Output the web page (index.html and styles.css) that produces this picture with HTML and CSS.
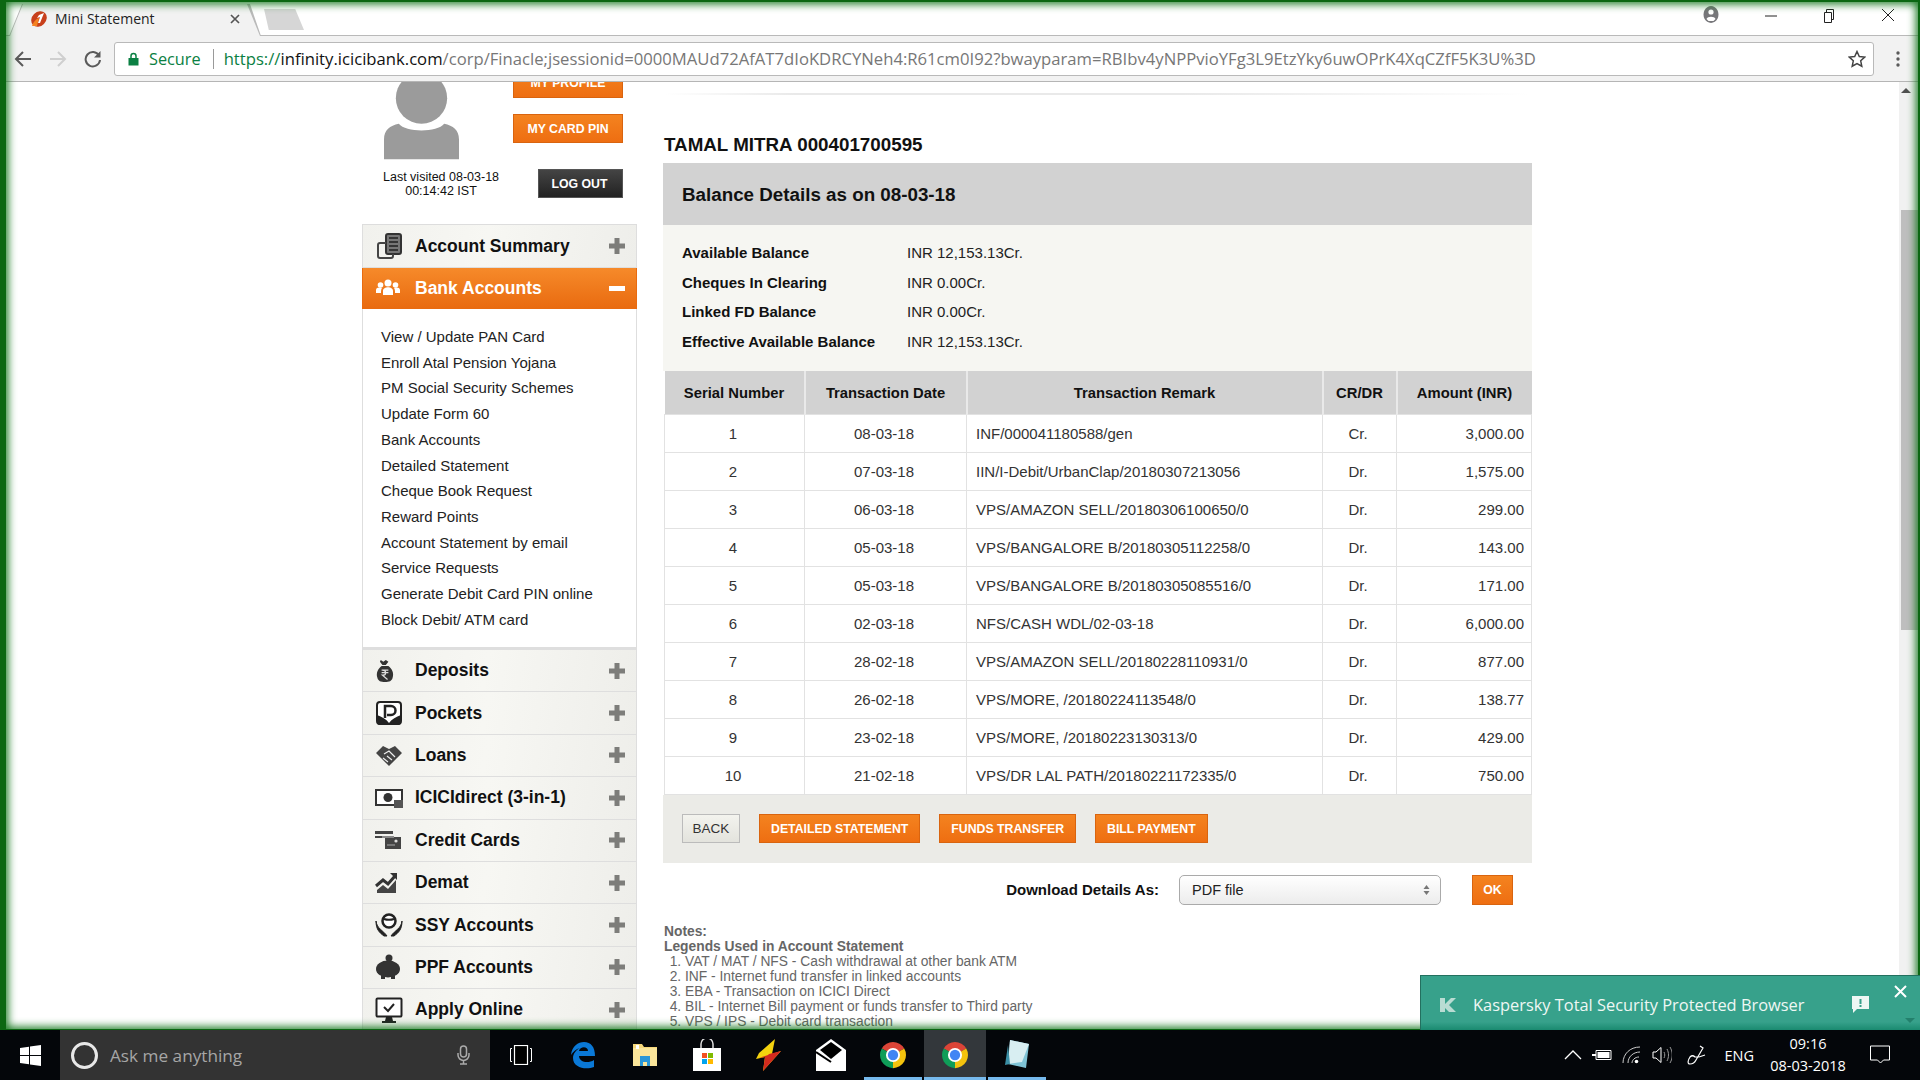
FILE: index.html
```html
<!DOCTYPE HTML>
<html>

<head>
    <title>Mini Statement</title>
    <meta name="viewport" content="width=device-width, initial-scale=1">
    <link rel="stylesheet" href="styles.css">
</head>

<body>
    <svg class="defs" width="0" height="0">
        <symbol id="plus" viewBox="0 0 16 16">
            <path d="M5.500 0h5v5.500H16v5h-5.500V16h-5v-5.500H0v-5h5.500z" fill="#7d7d7a" />
        </symbol>
        <symbol id="chrome" viewBox="0 0 32 32">
            <path d="M16 16 4 9A14 14 0 0 1 28 9z" fill="#db4437" />
            <path d="M16 16 28 9A14 14 0 0 1 16 30z" fill="#f4c20d" />
            <path d="M16 16 16 30A14 14 0 0 1 4 9z" fill="#0f9d58" />
            <circle cx="16" cy="16" r="6.500" fill="#4285f4" stroke="#fff" stroke-width="2" />
        </symbol>
    </svg>

    <div class="window">
        <div class="tabstrip">
            <div class="tab">
                <svg class="favicon" width="18" height="18" viewBox="0 0 18 18">
                    <ellipse cx="9" cy="9" rx="8.500" ry="7" transform="rotate(-45 9 9)" fill="#c8401c" />
                    <path d="M2 16C3 12 6 9 9 8L7 16z" fill="#f58220" />
                    <path d="M9 5 14 3 10 13 8 13 10 7 7 8z" fill="#fff" />
                </svg>
                <span class="tab-title">Mini Statement</span>
                <svg class="tab-close" width="12" height="12" viewBox="0 0 12 12">
                    <path d="M2 2l8 8M10 2l-8 8" stroke="#555" stroke-width="1.700" fill="none" />
                </svg>
            </div>
            <div class="newtab"></div>
            <div class="winbtns">
                <svg width="16" height="18" viewBox="0 0 16 18">
                    <path d="M8 0a7.500 8.500 0 1 0 .01 0z" fill="#77777a" />
                    <circle cx="8" cy="6" r="2.600" fill="#fff" />
                    <path d="M3.500 13c1-3 8-3 9 0l-2 2h-5z" fill="#fff" />
                </svg>
                <svg class="winbtn-min" width="12" height="12" viewBox="0 0 12 12">
                    <path d="M0 6h12" stroke="#222" stroke-width="1" />
                </svg>
                <svg class="winbtn-max" width="12" height="14" viewBox="0 0 12 14">
                    <path d="M1.500 3.500h7v10h-7zM3.500 3.500v-3h7v10h-2" stroke="#222" fill="none" />
                </svg>
                <svg class="winbtn-close" width="14" height="14" viewBox="0 0 14 14">
                    <path d="M1 1l12 12M13 1 1 13" stroke="#222" fill="none" />
                </svg>
            </div>
        </div>
        <div class="toolbar">
            <svg class="navicon" width="18" height="18" viewBox="0 0 18 18">
                <path d="M17 9H2M9 2 2 9l7 7" stroke="#5a5a5a" stroke-width="2" fill="none" />
            </svg>
            <svg class="navicon" width="18" height="18" viewBox="0 0 18 18">
                <path d="M1 9h15M9 2l7 7-7 7" stroke="#cfcfcf" stroke-width="2" fill="none" />
            </svg>
            <svg class="navicon" width="18" height="18" viewBox="0 0 18 18">
                <path d="M15 5.500A7.200 7.200 0 1 0 16 10" stroke="#5a5a5a" stroke-width="2" fill="none" />
                <path d="M16.500 1v6.500H10z" fill="#5a5a5a" />
            </svg>
            <div class="omnibox">
                <svg width="11" height="14" viewBox="0 0 11 14">
                    <path d="M3 6V4a2.500 2.500 0 0 1 5 0v2" stroke="#0b8043" stroke-width="1.500" fill="none" />
                    <path d="M0.500 6h10v7.500H0.500z" fill="#0b8043" />
                </svg>
                <span class="secure">Secure</span>
                <span class="omni-sep"></span>
                <span class="url"><span class="url-scheme">https://</span><span class="url-host">infinity.icicibank.com</span>/corp/Finacle;jsessionid=0000MAUd72AfAT7dIoKDRCYNeh4:R61cm0I92?bwayparam=RBIbv4yNPPvioYFg3L9EtzYky6uwOPrK4XqCZfF5K3U%3D</span>
                <svg class="star" width="18" height="18" viewBox="0 0 18 18">
                    <path d="M9 1.500l2.300 5 5.400.6-4 3.700 1.100 5.400L9 13.500l-4.800 2.700 1.100-5.400-4-3.700 5.400-.6z" stroke="#444" stroke-width="1.500" fill="none" />
                </svg>
            </div>
            <svg class="dots" width="4" height="16" viewBox="0 0 4 16">
                <circle cx="2" cy="2" r="1.700" fill="#5a5a5a" />
                <circle cx="2" cy="8" r="1.700" fill="#5a5a5a" />
                <circle cx="2" cy="14" r="1.700" fill="#5a5a5a" />
            </svg>
        </div>

        <div class="viewport">
            <div class="page">
                <div class="content">
                    <div class="sidebar">
                        <div class="profile">
                            <div class="profile-left">
                                <svg class="avatar" width="75" height="100" viewBox="0 0 76 100">
                                    <circle cx="38" cy="38" r="26" fill="#9b9b9b" />
                                    <path d="M0 100V80C0 70 6 66 15 64C22 73 54 73 61 64C70 66 76 70 76 80V100z" fill="#9b9b9b" />
                                </svg>
                                <p class="lastvisit">Last visited 08-03-18<br>00:14:42 IST</p>
                            </div>
                            <div class="profile-btns">
                                <button class="btn btn-profile">MY PROFILE</button>
                                <button class="btn btn-pin">MY CARD PIN</button>
                                <button class="btn btn-dark">LOG OUT</button>
                            </div>
                        </div>
                        <div class="nav">
                            <div class="nav-item nav-first">
                                <svg class="nav-icon" width="28" height="28" viewBox="0 0 28 28">
                                    <rect x="11" y="2" width="15" height="20" rx="2" fill="#777" stroke="#333" stroke-width="2" />
                                    <path d="M14 6h9M14 10h9M14 14h9M14 18h9" stroke="#222" stroke-width="1.500" />
                                    <path d="M11 11H5a2 2 0 0 0-2 2v11a2 2 0 0 0 2 2h11a2 2 0 0 0 2-2v-2" stroke="#444" stroke-width="2" fill="none" />
                                </svg>
                                <span>Account Summary</span>
                                <svg class="nav-toggle" width="16" height="16"><use href="#plus" /></svg>
                            </div>
                            <div class="nav-item nav-active">
                                <svg class="nav-icon" width="26" height="26" viewBox="0 0 26 26">
                                    <circle cx="13" cy="8" r="3.500" fill="#fff" />
                                    <circle cx="5.500" cy="10" r="2.800" fill="#fff" />
                                    <circle cx="20.500" cy="10" r="2.800" fill="#fff" />
                                    <path d="M8 20v-4c0-5 10-5 10 0v4zM1 18v-3c0-3 4-3 6-2-1 1-1 3-1 5zM25 18v-3c0-3-4-3-6-2 1 1 1 3 1 5z" fill="#fff" />
                                </svg>
                                <span>Bank Accounts</span>
                                <span class="nav-minus"></span>
                            </div>
                            <ul class="subnav">
                                <li>View / Update PAN Card</li>
                                <li>Enroll Atal Pension Yojana</li>
                                <li>PM Social Security Schemes</li>
                                <li>Update Form 60</li>
                                <li>Bank Accounts</li>
                                <li>Detailed Statement</li>
                                <li>Cheque Book Request</li>
                                <li>Reward Points</li>
                                <li>Account Statement by email</li>
                                <li>Service Requests</li>
                                <li>Generate Debit Card PIN online</li>
                                <li>Block Debit/ ATM card</li>
                            </ul>
                            <div class="nav-item">
                                <svg class="nav-icon nav-icon-bag" width="22" height="28" viewBox="0 0 26 28">
                                    <path d="M8 1l3 2 3-2 3 2-3 4h-4L7 3z" fill="#333" />
                                    <path d="M9 8h8c4 3 7 8 5 14-1 4-4 5-9 5s-8-1-9-5C2 16 5 11 9 8z" fill="#333" />
                                    <path d="M9 13h8M9 16h8M10 13c5 0 5 6 0 6l6 5" stroke="#ddd" stroke-width="1.500" fill="none" />
                                </svg>
                                <span>Deposits</span>
                                <svg class="nav-toggle" width="16" height="16"><use href="#plus" /></svg>
                            </div>
                            <div class="nav-item">
                                <svg class="nav-icon" width="28" height="26" viewBox="0 0 28 26">
                                    <rect x="2" y="2" width="24" height="22" rx="3" fill="#fff" stroke="#222" stroke-width="2" />
                                    <path d="M2 15c5 2 9 4 12 8 3-4 7-6 12-8v7a3 3 0 0 1-3 3H5a3 3 0 0 1-3-3z" fill="#222" />
                                    <path d="M10 18V6h6a4 4 0 0 1 0 9h-4" stroke="#222" stroke-width="2.500" fill="none" />
                                </svg>
                                <span>Pockets</span>
                                <svg class="nav-toggle" width="16" height="16"><use href="#plus" /></svg>
                            </div>
                            <div class="nav-item">
                                <svg class="nav-icon" width="28" height="24" viewBox="0 0 28 24">
                                    <path d="M1 10 8 3l6 3 6-3 7 7-5 5-8 8-8-8z" fill="#444" />
                                    <path d="M9 11l5-3 6 6M8 15l5 4M12 13l5 4" stroke="#eee" stroke-width="1.200" fill="none" />
                                </svg>
                                <span>Loans</span>
                                <svg class="nav-toggle" width="16" height="16"><use href="#plus" /></svg>
                            </div>
                            <div class="nav-item">
                                <svg class="nav-icon" width="28" height="20" viewBox="0 0 28 20">
                                    <rect x="1" y="2" width="26" height="15" fill="#fff" stroke="#333" stroke-width="2" />
                                    <circle cx="13" cy="9.500" r="4.500" fill="#333" />
                                    <path d="M19 12h9v8h-9z" fill="#555" />
                                </svg>
                                <span>ICICIdirect (3-in-1)</span>
                                <svg class="nav-toggle" width="16" height="16"><use href="#plus" /></svg>
                            </div>
                            <div class="nav-item">
                                <svg class="nav-icon" width="26" height="20" viewBox="0 0 26 20">
                                    <path d="M0 1h18v3H0zM0 6h8v2H0z" fill="#444" />
                                    <path d="M10 7h16v12H10z" fill="#444" />
                                    <path d="M7 6h12v2H7z" fill="#888" />
                                    <circle cx="21" cy="11" r="1.600" fill="#ddd" />
                                    <path d="M12 15h8" stroke="#aaa" />
                                </svg>
                                <span>Credit Cards</span>
                                <svg class="nav-toggle" width="16" height="16"><use href="#plus" /></svg>
                            </div>
                            <div class="nav-item">
                                <svg class="nav-icon" width="24" height="22" viewBox="0 0 24 22">
                                    <path d="M1 14 8 8l5 4 7-8" stroke="#333" stroke-width="3" fill="none" />
                                    <path d="M15 1h7v7z" fill="#333" />
                                    <path d="M2 21v-3l6-5 5 4 8-9v13z" fill="#444" />
                                </svg>
                                <span>Demat</span>
                                <svg class="nav-toggle" width="16" height="16"><use href="#plus" /></svg>
                            </div>
                            <div class="nav-item">
                                <svg class="nav-icon" width="28" height="26" viewBox="0 0 28 26">
                                    <circle cx="14" cy="9" r="6.500" fill="#fff" stroke="#222" stroke-width="2.500" />
                                    <path d="M9 7c3 1 7 1 10 0" stroke="#222" stroke-width="2" fill="none" />
                                    <path d="M1 9c1 8 7 9 11 15h-3C5 21 1 18 1 9zM27 9c-1 8-7 9-11 15h3c4-3 8-6 8-15z" fill="#222" stroke="#222" />
                                </svg>
                                <span>SSY Accounts</span>
                                <svg class="nav-toggle" width="16" height="16"><use href="#plus" /></svg>
                            </div>
                            <div class="nav-item">
                                <svg class="nav-icon" width="26" height="26" viewBox="0 0 26 26">
                                    <circle cx="14" cy="4" r="3.500" fill="#333" />
                                    <ellipse cx="13" cy="15" rx="12" ry="8.500" fill="#333" />
                                    <path d="M6 20h4v5H6zM16 20h4v5h-4z" fill="#333" />
                                </svg>
                                <span>PPF Accounts</span>
                                <svg class="nav-toggle" width="16" height="16"><use href="#plus" /></svg>
                            </div>
                            <div class="nav-item">
                                <svg class="nav-icon" width="28" height="26" viewBox="0 0 28 26">
                                    <rect x="1.500" y="1.500" width="25" height="18" rx="1" fill="#fff" stroke="#222" stroke-width="2" />
                                    <path d="M9 10l4 4 6-7" stroke="#222" stroke-width="2" fill="none" />
                                    <path d="M11 20h6l1 4h3v2H7v-2h3z" fill="#222" />
                                </svg>
                                <span>Apply Online</span>
                                <svg class="nav-toggle" width="16" height="16"><use href="#plus" /></svg>
                            </div>
                        </div>
                    </div>

                    <div class="main">
                        <div class="fade-line"></div>
                        <h1 class="acct-name">TAMAL MITRA 000401700595</h1>
                        <h2 class="balance-head">Balance Details as on 08-03-18</h2>
                        <div class="balance">
                            <b>Available Balance</b><span>INR 12,153.13Cr.</span>
                            <b>Cheques In Clearing</b><span>INR 0.00Cr.</span>
                            <b>Linked FD Balance</b><span>INR 0.00Cr.</span>
                            <b>Effective Available Balance</b><span>INR 12,153.13Cr.</span>
                        </div>
                        <table class="txns">
                            <colgroup>
                                <col class="col-serial">
                                <col class="col-date">
                                <col class="col-remark">
                                <col class="col-crdr">
                                <col class="col-amount">
                            </colgroup>
                            <thead>
                                <tr>
                                    <th>Serial Number</th>
                                    <th>Transaction Date</th>
                                    <th>Transaction Remark</th>
                                    <th>CR/DR</th>
                                    <th>Amount (INR)</th>
                                </tr>
                            </thead>
                            <tbody>
                                <tr><td>1</td><td>08-03-18</td><td>INF/000041180588/gen</td><td>Cr.</td><td>3,000.00</td></tr>
                                <tr><td>2</td><td>07-03-18</td><td>IIN/I-Debit/UrbanClap/20180307213056</td><td>Dr.</td><td>1,575.00</td></tr>
                                <tr><td>3</td><td>06-03-18</td><td>VPS/AMAZON SELL/20180306100650/0</td><td>Dr.</td><td>299.00</td></tr>
                                <tr><td>4</td><td>05-03-18</td><td>VPS/BANGALORE B/20180305112258/0</td><td>Dr.</td><td>143.00</td></tr>
                                <tr><td>5</td><td>05-03-18</td><td>VPS/BANGALORE B/20180305085516/0</td><td>Dr.</td><td>171.00</td></tr>
                                <tr><td>6</td><td>02-03-18</td><td>NFS/CASH WDL/02-03-18</td><td>Dr.</td><td>6,000.00</td></tr>
                                <tr><td>7</td><td>28-02-18</td><td>VPS/AMAZON SELL/20180228110931/0</td><td>Dr.</td><td>877.00</td></tr>
                                <tr><td>8</td><td>26-02-18</td><td>VPS/MORE, /20180224113548/0</td><td>Dr.</td><td>138.77</td></tr>
                                <tr><td>9</td><td>23-02-18</td><td>VPS/MORE, /20180223130313/0</td><td>Dr.</td><td>429.00</td></tr>
                                <tr><td>10</td><td>21-02-18</td><td>VPS/DR LAL PATH/20180221172335/0</td><td>Dr.</td><td>750.00</td></tr>
                            </tbody>
                        </table>
                        <div class="actions">
                            <button class="btn btn-light">BACK</button>
                            <button class="btn">DETAILED STATEMENT</button>
                            <button class="btn">FUNDS TRANSFER</button>
                            <button class="btn">BILL PAYMENT</button>
                        </div>
                        <div class="download">
                            <b>Download Details As:</b>
                            <div class="select">
                                <span>PDF file</span>
                                <svg width="7" height="12" viewBox="0 0 7 12">
                                    <path d="M3.500 1 6.500 5h-6zM3.500 11 .5 7h6z" fill="#777" />
                                </svg>
                            </div>
                            <button class="btn btn-ok">OK</button>
                        </div>
                        <div class="notes">
                            <b>Notes:</b>
                            <b>Legends Used in Account Statement</b>
                            <ol>
                                <li>VAT / MAT / NFS - Cash withdrawal at other bank ATM</li>
                                <li>INF - Internet fund transfer in linked accounts</li>
                                <li>EBA - Transaction on ICICI Direct</li>
                                <li>BIL - Internet Bill payment or funds transfer to Third party</li>
                                <li>VPS / IPS - Debit card transaction</li>
                            </ol>
                        </div>
                    </div>
                </div>
            </div>
            <div class="scrollbar">
                <span class="scroll-up"></span>
                <span class="scroll-thumb"></span>
            </div>
        </div>
        <div class="frame"></div>
    </div>

    <div class="taskbar">
        <div class="start">
            <svg width="21" height="21" viewBox="0 0 21 21">
                <path d="M0 3l9-1.300V10H0zM10 1.500 21 0v10H10zM0 11h9v8.300L0 18zM10 11h11v10l-11-1.500z" fill="#fff" />
            </svg>
        </div>
        <div class="search">
            <span class="cortana"></span>
            <span class="search-text">Ask me anything</span>
            <svg width="13" height="20" viewBox="0 0 13 20">
                <rect x="3.500" y="1" width="6" height="11" rx="3" fill="none" stroke="#aaa" stroke-width="1.500" />
                <path d="M1 8v2a5.500 5.500 0 0 0 11 0V8M6.500 16v3M3 19h7" stroke="#aaa" stroke-width="1.500" fill="none" />
            </svg>
        </div>
        <div class="task">
            <svg width="22" height="20" viewBox="0 0 22 20">
                <rect x="4.500" y="0.500" width="13" height="19" fill="#000" stroke="#fff" stroke-width="1.200" />
                <path d="M2 3.500H0.500v13H2M20 3.500h1.500v13H20" stroke="#fff" fill="none" />
            </svg>
        </div>
        <div class="task">
            <svg width="26" height="28" viewBox="0 0 26 28">
                <path d="M1 14C2 5 8 1 14 1c7 0 11 5 11 14H9c0 6 9 8 15 4v7c-8 3-21 1-21-9 0-4 3-8 7-10-4 1-7 4-9 7zM9 10h9c0-5-8-5-9 0z" fill="#0a78d7" />
            </svg>
        </div>
        <div class="task">
            <svg width="26" height="26" viewBox="0 0 26 26">
                <path d="M1 2h9l2 3h13v15H1z" fill="#f6d77a" />
                <path d="M1 6h24v18H1z" fill="#fbe59a" />
                <path d="M8 14h10v10h-3v-4h-4v4H8z" fill="#2b97d8" />
                <path d="M4 3h3v4H4z" fill="#fff" />
            </svg>
        </div>
        <div class="task">
            <svg width="28" height="32" viewBox="0 0 28 32">
                <path d="M8 9V5a6 6 0 0 1 12 0v4" stroke="#ddd" stroke-width="1.500" fill="none" />
                <path d="M0 9h28v23H0z" fill="#fff" />
                <path d="M9 14h5v5H9z" fill="#f25022" />
                <path d="M15 14h5v5h-5z" fill="#7fba00" />
                <path d="M9 20h5v5H9z" fill="#00a4ef" />
                <path d="M15 20h5v5h-5z" fill="#ffb900" />
            </svg>
        </div>
        <div class="task">
            <svg width="28" height="32" viewBox="0 0 28 32">
                <path d="M20 0 4 14l-3 6 9-2-2 14 18-20-9 3z" fill="#f4d20e" />
                <path d="M26 12 8 32l2-14-6 1 9-3 1-1z" fill="#d32a1e" />
            </svg>
        </div>
        <div class="task">
            <svg width="30" height="32" viewBox="0 0 30 32">
                <path d="M0 11 15 0l15 11v21H0z" fill="#fff" />
                <path d="M4 11 15 3l11 8-11 9z" fill="#000" />
                <path d="M0 13 15 23" stroke="#000" stroke-width="2" />
            </svg>
        </div>
        <div class="task task-open">
            <svg width="30" height="30"><use href="#chrome" /></svg>
        </div>
        <div class="task task-open task-current">
            <svg width="30" height="30"><use href="#chrome" /></svg>
        </div>
        <div class="task task-open">
            <svg width="26" height="32" viewBox="0 0 26 32">
                <path d="M6 1 25 5l-3 24-18-4z" fill="#7fc3d6" />
                <path d="M6 1 25 5l-7 18L4 25z" fill="#d8eef2" />
                <path d="M1 26 4 6l2 19z" fill="#3b8fa6" />
            </svg>
        </div>
        <div class="tray">
            <svg width="18" height="10" viewBox="0 0 18 10"><path d="M1 9l8-8 8 8" stroke="#fff" stroke-width="1.300" fill="none" /></svg>
            <svg width="20" height="12" viewBox="0 0 20 12">
                <path d="M4 1.500h15v9H4z" stroke="#fff" fill="none" />
                <path d="M5.500 3h12v6h-12zM0 5h4v2H0z" fill="#fff" />
            </svg>
            <svg width="20" height="18" viewBox="0 0 20 18">
                <path d="M1 17C1 8 8 1 18 1M6 17c0-6 5-11 12-11M10 17c0-3 3-6 7-6" stroke="#ccc" fill="none" />
                <circle cx="14.500" cy="15.500" r="1.800" fill="#fff" />
            </svg>
            <svg width="20" height="18" viewBox="0 0 20 18">
                <path d="M1 6h3l5-4.500v15L4 12H1z" stroke="#fff" fill="none" />
                <path d="M12 6c1 2 1 4 0 6M15 3c2 4 2 8 0 12M18 1c3 5 3 11 0 16" stroke="#999" fill="none" />
            </svg>
            <svg class="tray-pen" width="22" height="22" viewBox="0 0 22 22">
                <path d="M15 2l3 2-7 12c-1 2-3 4-6 4s-2-4 0-7c2-2 4-1 5 0l4 0 6-2" stroke="#fff" stroke-width="1.200" fill="none" />
            </svg>
            <span class="tray-lang">ENG</span>
            <div class="clock"><span>09:16</span><span>08-03-2018</span></div>
            <svg class="tray-note" width="20" height="20" viewBox="0 0 20 20">
                <path d="M.5 1h19v14h-6l-3 3-3-3H.5z" stroke="#fff" fill="none" />
            </svg>
        </div>
    </div>

    <div class="kaspersky">
        <svg width="16" height="16" viewBox="0 0 16 16">
            <path d="M0 1h5v6l6-6h5L9 8l7 7H9L5 11v4H0z" fill="#b9dcd3" />
        </svg>
        <span class="ks-text">Kaspersky Total Security Protected Browser</span>
        <svg class="ks-msg" width="17" height="17" viewBox="0 0 17 17">
            <path d="M0 0h17v13H5l-4 4v-4H0z" fill="#eef7f4" />
            <path d="M7.500 3h2v5h-2zM7.500 9h2v2h-2z" fill="#37a08a" />
        </svg>
        <svg class="ks-close" width="13" height="13" viewBox="0 0 13 13">
            <path d="M1 1l11 11M12 1 1 12" stroke="#fff" stroke-width="2" />
        </svg>
        <span class="ks-caret"></span>
    </div>
</body>

</html>
```

FILE: styles.css
```css
html,
body {
    margin: 0;
    height: 100%;
    overflow: hidden;
    font-family: "Liberation Sans", Arial, sans-serif;
    background: #fff;
}

.defs {
    display: block;
    height: 0;
}

button {
    font-family: inherit;
}

/* browser window */
.window {
    position: relative;
    height: 1030px;
    display: flex;
    flex-direction: column;
    overflow: hidden;
}

.frame {
    position: absolute;
    inset: 0;
    pointer-events: none;
    border: solid #0b6712;
    border-width: 2px 2px 1px 6px;
    box-shadow: inset 0 0 8px 2px #16781f;
}

.tabstrip {
    height: 36px;
    flex: none;
    display: flex;
    box-sizing: border-box;
    padding: 4px 0 0 9px;
    background: #fff;
    border-bottom: 1px solid #b9b9b9;
}

.tab {
    width: 252px;
    height: 32px;
    box-sizing: border-box;
    display: flex;
    align-items: center;
    padding: 0 20px 3px 21px;
    background: #b9b9b9;
    clip-path: polygon(0 100%, 13px 0, 241px 0, 100% 100%);
    position: relative;
    z-index: 0;
}

.tab::before {
    content: "";
    position: absolute;
    inset: 0 1px 0 1px;
    z-index: -1;
    background: #f2f2f2;
    clip-path: polygon(0 100%, 13px 0, 237px 0, 100% 100%);
}

.favicon {
    flex: none;
}

.tab-title {
    margin-left: 7px;
    font: 14px "Open Sans", sans-serif;
    color: #222;
}

.tab-close {
    margin-left: auto;
}

.newtab {
    width: 40px;
    height: 21px;
    margin: 5px 0 0 3px;
    background: #d6d6d6;
    clip-path: polygon(0 0, 78% 0, 100% 100%, 12% 100%);
}

.winbtns {
    margin-left: auto;
    display: flex;
    align-items: flex-start;
    padding: 2px 25px 0 0;
}

.winbtn-min {
    margin: 4px 0 0 46px;
}

.winbtn-max {
    margin: 3px 0 0 46px;
}

.winbtn-close {
    margin: 2px 0 0 46px;
}

.toolbar {
    height: 46px;
    flex: none;
    box-sizing: border-box;
    display: flex;
    align-items: center;
    padding: 0 20px 0 14px;
    background: #f2f2f2;
    border-bottom: 1px solid #b5b5b5;
}

.navicon {
    margin-right: 17px;
    flex: none;
}

.navicon:nth-child(3) {
    margin-right: 12px;
}

.omnibox {
    flex: 1;
    height: 34px;
    box-sizing: border-box;
    display: flex;
    align-items: center;
    padding: 0 7px 0 13px;
    background: #fff;
    border: 1px solid #b9b9b9;
    border-radius: 3px;
    font: 16.670px "Open Sans", sans-serif;
    white-space: nowrap;
    overflow: hidden;
}

.secure {
    margin-left: 10px;
    font-size: 16.300px;
    color: #0b8043;
}

.omni-sep {
    width: 1px;
    height: 20px;
    margin: 0 10px 0 12px;
    background: #9a9a9a;
}

.url {
    color: #777;
}

.url-scheme {
    color: #0b8043;
}

.url-host {
    color: #111;
}

.star {
    margin-left: auto;
}

.dots {
    margin-left: 22px;
}

/* page area */
.viewport {
    flex: 1;
    display: flex;
    min-height: 0;
}

.page {
    flex: 1;
    overflow: hidden;
}

.content {
    display: flex;
    margin-top: -22px;
    padding-left: 362px;
}

.scrollbar {
    width: 21px;
    flex: none;
    background: #f1f1f1;
    display: flex;
    flex-direction: column;
    align-items: center;
}

.scroll-up {
    width: 0;
    height: 0;
    margin: 6px 8px 0 0;
    border: solid transparent;
    border-width: 0 5px 5px;
    border-bottom-color: #505050;
}

.scroll-thumb {
    width: 19px;
    height: 420px;
    margin: 117px 0 0 2px;
    background: #bebebe;
}

/* left column */
.sidebar {
    width: 276px;
    flex: none;
}

.profile {
    height: 164px;
    display: flex;
    padding-left: 21px;
    box-sizing: border-box;
}

.profile-left {
    width: 116px;
}

.avatar {
    display: block;
    margin-left: 1px;
}

.lastvisit {
    margin: 10px 0 0;
    font-size: 12.500px;
    line-height: 14px;
    text-align: center;
    color: #111;
    white-space: nowrap;
}

.profile-btns {
    width: 110px;
    margin: 8px 0 0 14px;
    display: flex;
    flex-direction: column;
    align-items: flex-end;
}

.btn {
    height: 29px;
    padding: 0 11px;
    box-sizing: border-box;
    font-size: 12.300px;
    font-weight: bold;
    color: #fff;
    background: linear-gradient(#f4831f, #ee6e12);
    border: 1px solid #d9640f;
    white-space: nowrap;
}

.btn-profile {
    height: 30px;
    width: 110px;
}

.btn-pin {
    width: 110px;
    margin-top: 16px;
}

.btn-dark {
    width: 85px;
    margin-top: 26px;
    padding-right: 13px;
    background: linear-gradient(#444, #222);
    border-color: #555;
}

.nav {
    width: 275px;
    border-top: 1px solid #ddd;
    box-sizing: border-box;
}

.nav-item {
    height: 42.400px;
    box-sizing: border-box;
    display: flex;
    align-items: center;
    padding: 0 11px 0 52px;
    position: relative;
    font-size: 17.500px;
    font-weight: bold;
    color: #111;
    background: linear-gradient(100deg, #f1f1ed, #f7f7f3 45%, #eeeeea);
    border: solid #dedede;
    border-width: 0 1px 1px;
}

.nav-first {
    height: 43px;
}

.nav-active {
    height: 41px;
    color: #fff;
    background: linear-gradient(#f68a2a, #e96b10);
    border-color: #e96b10;
}

.nav-icon {
    position: absolute;
    left: 12px;
    top: 50%;
    transform: translateY(-50%);
}

.nav-icon-bag {
    left: 11px;
}

.nav-toggle {
    margin-left: auto;
}

.nav-minus {
    width: 16px;
    height: 5px;
    margin-left: auto;
    background: #fff;
}

.subnav {
    height: 341px;
    margin: 0;
    padding: 15px 0 0 18px;
    box-sizing: border-box;
    list-style: none;
    font-size: 15px;
    line-height: 25.700px;
    color: #222;
    background: #fff;
    border: solid #dedede;
    border-width: 0 1px 3px;
}

/* right column */
.main {
    width: 869px;
    margin-left: 25px;
    flex: none;
}

.fade-line {
    height: 2px;
    margin: 33px 2px 0;
    background: linear-gradient(90deg, #fff, #e9e9e9 15%, #e9e9e9 60%, #fff);
}

.acct-name {
    margin: 0;
    height: 68px;
    box-sizing: border-box;
    padding: 38px 0 0 1px;
    line-height: 24px;
    font-size: 18.800px;
    color: #111;
}

.balance-head {
    margin: 0;
    height: 62px;
    padding-left: 19px;
    line-height: 63px;
    font-size: 18.800px;
    color: #111;
    background: #d2d2d2;
}

.balance {
    height: 146px;
    box-sizing: border-box;
    padding: 13px 0 0 19px;
    display: grid;
    grid-template-columns: 225px 1fr;
    grid-auto-rows: 29.600px;
    align-items: center;
    font-size: 15px;
    color: #222;
    background: #f6f6f2;
}

.balance b {
    color: #111;
}

.txns {
    width: 868px;
    margin: 0 0 0 1px;
    table-layout: fixed;
    border-collapse: collapse;
    font-size: 15px;
    color: #333;
}

.col-serial {
    width: 140px;
}

.col-date {
    width: 162px;
}

.col-remark {
    width: 356px;
}

.col-crdr {
    width: 74px;
}

.txns th {
    height: 43px;
    padding: 0;
    font-size: 14.800px;
    color: #111;
    background: #d2d2d2;
    border-right: 2px solid #e9e9e9;
}

.txns th:last-child {
    border-right: 0;
}

.txns td {
    height: 38px;
    padding: 0 3px 0 0;
    box-sizing: border-box;
    text-align: center;
    border: 1px solid #e2e2e2;
    white-space: nowrap;
}

.txns td:nth-child(3) {
    padding: 0 0 0 9px;
    text-align: left;
}

.txns td:last-child {
    padding: 0 7px 0 0;
    text-align: right;
}

.actions {
    height: 68px;
    box-sizing: border-box;
    display: flex;
    gap: 19px;
    padding: 19px 0 0 19px;
    background: #ebebe7;
}

.btn-light {
    width: 58px;
    padding: 0;
    font-size: 13.500px;
    color: #333;
    background: linear-gradient(#f3f3ee, #e3e3dd);
    border-color: #bbb;
    font-weight: normal;
}

.download {
    height: 30px;
    margin-top: 12px;
    display: flex;
    align-items: center;
    justify-content: flex-end;
    padding-right: 19px;
    font-size: 15px;
    color: #111;
}

.download b {
    padding-bottom: 2px;
}

.select {
    width: 262px;
    height: 30px;
    box-sizing: border-box;
    margin-left: 20px;
    padding: 0 10px 0 12px;
    display: flex;
    align-items: center;
    justify-content: space-between;
    font-size: 14.500px;
    font-weight: normal;
    color: #222;
    background: linear-gradient(#fff, #ececec);
    border: 1px solid #aaa;
    border-radius: 5px;
}

.btn-ok {
    width: 41px;
    height: 30px;
    margin-left: 31px;
    padding: 0;
}

.notes {
    margin-top: 19px;
    padding-left: 1px;
    font-size: 13.800px;
    line-height: 15px;
    color: #666;
}

.notes b {
    display: block;
}

.notes ol {
    margin: 0;
    padding: 0 0 0 21px;
}

/* windows taskbar */
.taskbar {
    height: 50px;
    display: flex;
    align-items: center;
    background: #04060a;
    color: #fff;
}

.start {
    width: 60px;
    height: 50px;
    flex: none;
    display: flex;
    align-items: center;
    justify-content: center;
}

.search {
    width: 430px;
    height: 50px;
    flex: none;
    box-sizing: border-box;
    display: flex;
    align-items: center;
    padding: 0 20px 0 11px;
    background: #333;
}

.cortana {
    width: 21px;
    height: 21px;
    border: 3px solid #e8e8e8;
    border-radius: 50%;
    flex: none;
}

.search-text {
    margin-left: 12px;
    margin-right: auto;
    font: 17.200px "Open Sans", sans-serif;
    color: #a6a6a6;
}

.task {
    width: 62px;
    height: 50px;
    flex: none;
    box-sizing: border-box;
    display: flex;
    align-items: center;
    justify-content: center;
}

.task-open {
    border-bottom: 3px solid #76b9ed;
    padding-top: 3px;
}

.task-open:not(.task-current) {
    border-image: linear-gradient(90deg, #04060a 8%, #76b9ed 8%, #76b9ed 92%, #04060a 92%) 3;
    border-width: 0 0 3px;
}

.task-current {
    background-color: #33373b;
}

.tray {
    margin-left: auto;
    height: 50px;
    display: flex;
    align-items: center;
    gap: 10px;
    padding-right: 30px;
    font: 14.500px "Open Sans", sans-serif;
}

.tray-pen {
    margin-left: 3px;
}

.tray-lang {
    margin-left: 7px;
}

.clock {
    width: 86px;
    margin-left: 1px;
    display: flex;
    flex-direction: column;
    align-items: center;
    line-height: 22px;
}

.tray-note {
    margin-left: 9px;
}

/* kaspersky toast sits over the browser window */
.kaspersky {
    position: absolute;
    right: 0;
    bottom: 50px;
    width: 500px;
    height: 55px;
    box-sizing: border-box;
    display: flex;
    align-items: center;
    padding: 3px 0 0 19px;
    background: linear-gradient(#37a18b 85%, #1a8a70);
    border-top: 1px solid #23705f;
    border-left: 1px solid #23705f;
    color: #eef7f4;
}

.ks-text {
    margin-left: 17px;
    font: 16.400px "Open Sans", sans-serif;
}

.ks-msg {
    position: absolute;
    left: 431px;
    top: 20px;
}

.ks-close {
    position: absolute;
    right: 13px;
    top: 9px;
}

.ks-caret {
    position: absolute;
    right: 5px;
    bottom: 7px;
    border: solid transparent;
    border-width: 5px 5px 0;
    border-top-color: #23806c;
}
```
